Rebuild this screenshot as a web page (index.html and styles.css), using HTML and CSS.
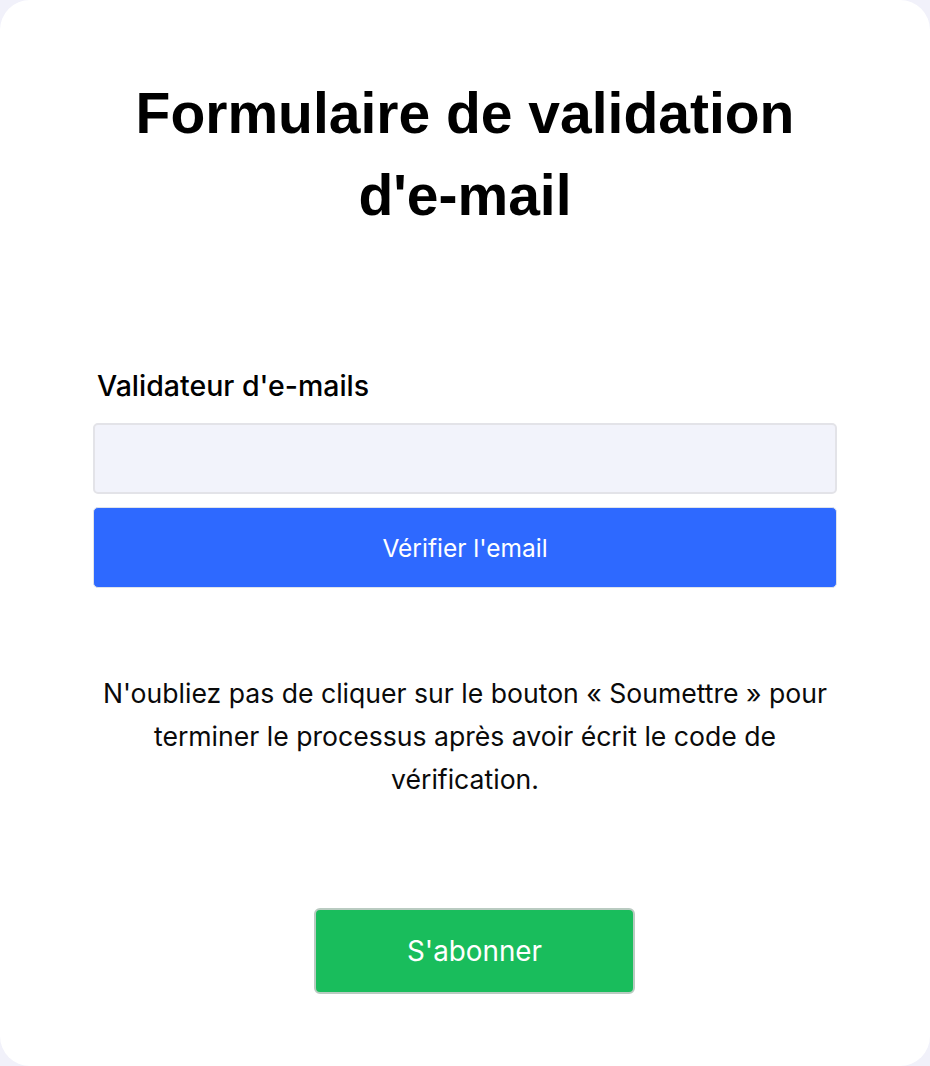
FILE: index.html
```html
<!DOCTYPE html>
<html lang="fr">
<head>
    <meta charset="UTF-8">
    <meta name="viewport" content="width=device-width, initial-scale=1.0">
    <title>Formulaire de validation d'e-mail</title>
    <link rel="stylesheet" href="styles.css">
</head>
<body>
    <div class="card">
        <h1>Formulaire de validation d'e-mail</h1>

        <form class="email-form" id="emailForm">
            <label for="emailInput" class="form-label">Validateur d'e-mails</label>
            <input type="email" id="emailInput" class="email-input">
            <button type="button" class="verify-button">Vérifier l'email</button>
        </form>

        <p class="hint">N'oubliez pas de cliquer sur le bouton « Soumettre » pour terminer le processus après avoir écrit le code de vérification.</p>

        <button type="submit" class="subscribe-button">S'abonner</button>
    </div>
</body>
</html>
```

FILE: styles.css
```css
body {
    margin: 0;
    padding: 0;
    background-color: #f1f1fa;
    font-family: Inter, "Noto Sans", sans-serif;
}

.card {
    box-sizing: border-box;
    min-height: 1066px;
    background-color: #fff;
    border-radius: 30px;
    padding: 72px 93px 40px 93px;
}

h1 {
    margin: 0;
    font-family: "Liberation Sans", Arial, sans-serif;
    font-size: 57px;
    font-weight: bold;
    line-height: 82px;
    color: #000;
    text-align: center;
}

.email-form {
    display: flex;
    flex-direction: column;
    margin-top: 132px;
}

.form-label {
    font-size: 28.5px;
    font-weight: 500;
    color: #000;
    padding-left: 4px;
    margin-bottom: 20px;
}

.email-input {
    box-sizing: border-box;
    height: 71px;
    background-color: #f2f3fb;
    border: 2px solid #e3e3e8;
    border-radius: 5px;
    padding: 0 16px;
    font-size: 20px;
    font-family: inherit;
}

.verify-button {
    box-sizing: border-box;
    height: 81px;
    margin-top: 13px;
    background-color: #2e69ff;
    color: #fff;
    border: 1px solid #dfe3ea;
    border-radius: 5px;
    font-family: inherit;
    font-size: 24.5px;
    cursor: pointer;
}

.hint {
    margin: 84px 0 0;
    font-size: 26.6px;
    line-height: 43.2px;
    color: #0a0a0a;
    text-align: center;
}

.subscribe-button {
    display: block;
    box-sizing: border-box;
    width: 321px;
    height: 86px;
    margin: 106px 0 0 221px;
    background-color: #19bd5c;
    color: #fff;
    border: 2px solid #b9cbc1;
    border-radius: 6px;
    font-family: inherit;
    font-size: 27.8px;
    cursor: pointer;
}
```
